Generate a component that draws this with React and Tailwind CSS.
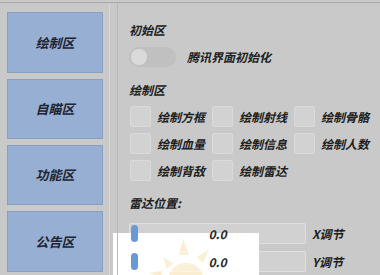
import React from "react";

const font = { fontFamily: '"Noto Sans CJK SC", "Noto Sans", sans-serif' };

function NavBtn({ label, h }) {
  return (
    <div
      className={`flex items-center justify-center bg-[#97afd3] border border-[#8aa0c2] text-[13px] font-bold italic text-[#1e2430] ${h}`}
    >
      {label}
    </div>
  );
}

function Check({ label }) {
  return (
    <div className="flex items-center gap-[6px] h-[21px]">
      <div className="w-[21px] h-[21px] bg-[#d2d2d2] border border-[#dadada] rounded-[2px]" />
      <span className="text-[12px] font-bold italic text-[#202020] leading-none">{label}</span>
    </div>
  );
}

function Slider({ label }) {
  return (
    <div className="flex items-center h-[21px]">
      <div className="relative w-[177px] h-[21px] bg-white/15 border border-white/30 rounded-[2px] flex items-center justify-center">
        <div className="absolute left-[1px] top-[1px] w-[7px] h-[17px] rounded-full bg-[#6b98d6]" />
        <span className="text-[12px] italic font-semibold text-[#252525] leading-none">0.0</span>
      </div>
      <span className="ml-[6px] text-[12px] font-bold italic text-[#202020] leading-none">{label}</span>
    </div>
  );
}

export default function App() {
  return (
    <div className="relative w-[380px] h-[275px] bg-[#c9c9c9] overflow-hidden" style={font}>
      {/* watermark beneath content */}
      <div className="absolute left-[113px] top-[233px] w-[146px] h-[42px] bg-white overflow-hidden">
        <svg width="146" height="42" viewBox="0 0 146 42">
          <g fill="#f3d48c" opacity="0.4">
            <circle cx="73" cy="48" r="18" />
            <path d="M50 24 L60 30 L54 36 Z" />
            <path d="M70 6 L76 22 L66 22 Z" />
            <path d="M96 16 L90 30 L84 24 Z" />
            <path d="M36 40 L50 37 L48 44 Z" />
          </g>
        </svg>
      </div>
      <div className="relative">
        <div className="h-[2px]" />
        <div className="h-[1px] bg-[#a9a9a9]" />
        <div className="flex h-[272px]">
          {/* left nav */}
          <div className="w-[110px] flex flex-col gap-[6px] pt-[9px] pl-[7px] pr-[6px] border-r border-[#d6d6d6]">
            <NavBtn label="绘制区" h="h-[61px]" />
            <NavBtn label="自瞄区" h="h-[60px]" />
            <NavBtn label="功能区" h="h-[60px]" />
            <NavBtn label="公告区" h="h-[61px]" />
          </div>
          <div className="w-[7px]" />
          {/* right panel */}
          <div className="flex-1 border-l border-[#b9b9b9] pl-[11px] pt-[21px] flex flex-col">
            <div className="text-[12px] font-bold italic text-[#202020] leading-none">初始区</div>
            <div className="flex items-center mt-[11px] h-[20px]">
              <div className="relative w-[47px] h-[20px] rounded-full bg-[#c0c0c0]">
                <div className="absolute left-[2px] top-[2px] w-[16px] h-[16px] rounded-full bg-[#dadada]" />
              </div>
              <span className="ml-[11px] text-[12px] font-bold italic text-[#202020] leading-none">腾讯界面初始化</span>
            </div>
            <div className="mt-[17px] text-[12px] font-bold italic text-[#202020] leading-none">绘制区</div>
            <div className="mt-[10px] grid grid-cols-[82px_82px_82px] gap-y-[6px] pl-[1px]">
              <Check label="绘制方框" />
              <Check label="绘制射线" />
              <Check label="绘制骨骼" />
              <Check label="绘制血量" />
              <Check label="绘制信息" />
              <Check label="绘制人数" />
              <Check label="绘制背敌" />
              <Check label="绘制雷达" />
            </div>
            <div className="mt-[16px] text-[12px] font-bold italic text-[#202020] leading-none">雷达位置:</div>
            <div className="mt-[14px] flex flex-col gap-[7px]">
              <Slider label="X调节" />
              <Slider label="Y调节" />
            </div>
          </div>
        </div>
      </div>
    </div>
  );
}
